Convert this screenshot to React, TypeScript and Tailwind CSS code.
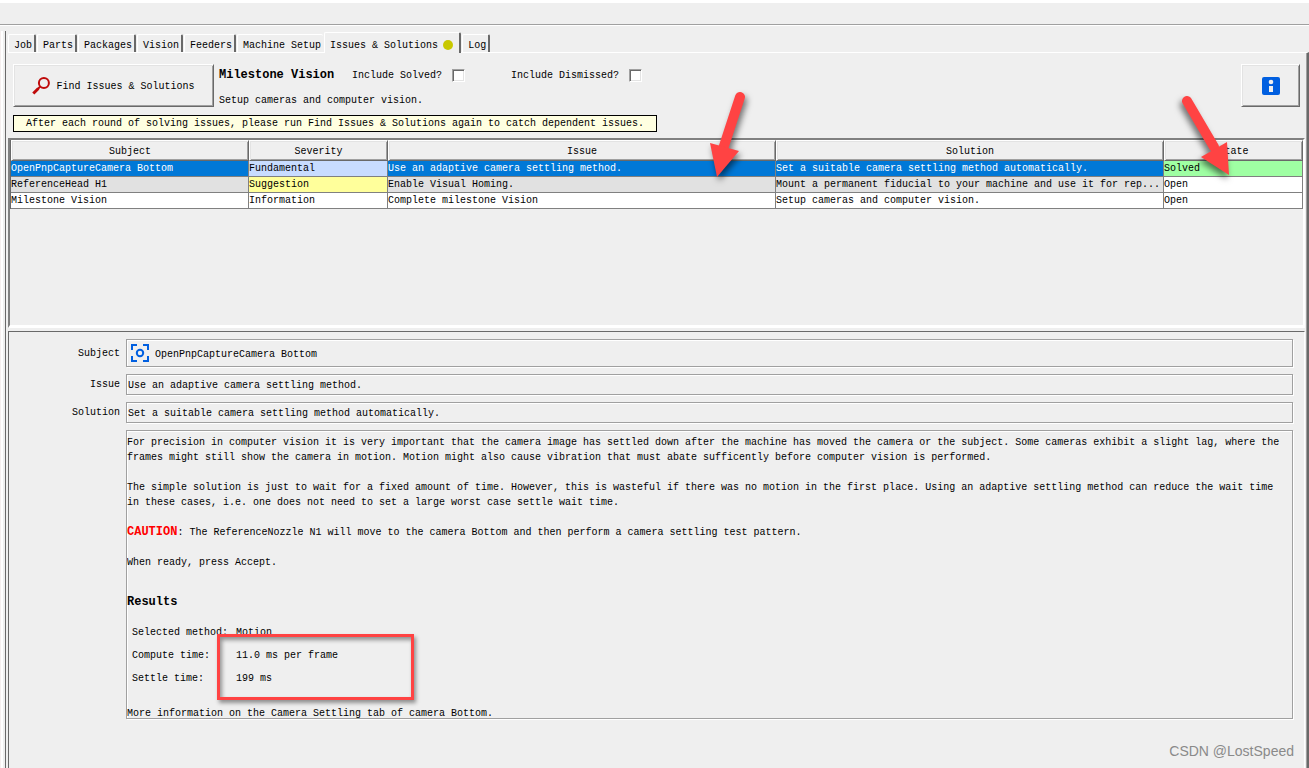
import { useState } from 'react';
import type { ReactNode } from 'react';

const tabs = ['Job', 'Parts', 'Packages', 'Vision', 'Feeders', 'Machine Setup', 'Issues & Solutions', 'Log'];

const issues = [
  {
    subject: 'OpenPnpCaptureCamera Bottom',
    severity: 'Fundamental',
    issue: 'Use an adaptive camera settling method.',
    solution: 'Set a suitable camera settling method automatically.',
    state: 'Solved',
    row: 'bg-[#0078d7] text-white',
    severityBg: 'bg-[#c8dcff] text-black',
    stateBg: 'bg-[#9fffa3] text-black',
  },
  {
    subject: 'ReferenceHead H1',
    severity: 'Suggestion',
    issue: 'Enable Visual Homing.',
    solution: 'Mount a permanent fiducial to your machine and use it for rep...',
    state: 'Open',
    row: 'bg-[#e1e1e1]',
    severityBg: 'bg-[#ffff9b]',
    stateBg: 'bg-white',
  },
  {
    subject: 'Milestone Vision',
    severity: 'Information',
    issue: 'Complete milestone Vision',
    solution: 'Setup cameras and computer vision.',
    state: 'Open',
    row: 'bg-white',
    severityBg: 'bg-white',
    stateBg: 'bg-white',
  },
];

const results = [
  ['Selected method:', 'Motion'],
  ['Compute time:', '11.0 ms per frame'],
  ['Settle time:', '199 ms'],
];

const raised =
  'border border-t-white border-l-white border-r-[#696969] border-b-[#696969] shadow-[inset_1px_1px_0_#e3e3e3,inset_-1px_-1px_0_#a0a0a0]';
const etched = 'border border-[#a0a0a0] shadow-[inset_1px_1px_0_#fff,1px_1px_0_#fff]';
const cell = 'h-4 overflow-hidden border-r border-b border-[#808080] p-0 leading-[15px] text-ellipsis whitespace-nowrap';

function Tab({ label, active, onClick }: { label: string; active: boolean; onClick: () => void }) {
  const beforeActive = label === 'Machine Setup';
  return (
    <button
      role="tab"
      aria-selected={active}
      onClick={onClick}
      className={`flex items-center gap-1 rounded-t-xs border-t border-l border-white pl-1.25 whitespace-nowrap ${
        active ? 'relative -mb-px h-5.25 bg-[#efefef] pt-1 pr-1.25' : 'h-4.5 pt-1 pr-0.5'
      } ${beforeActive ? '' : 'border-r-2 border-r-[#696969]'}`}
    >
      {label}
      {label === 'Issues & Solutions' && <span className="mx-px size-2.5 rounded-full bg-[#c8c800]" />}
    </button>
  );
}

function Check({ label }: { label: string }) {
  return (
    <label className="flex items-center gap-2.5">
      {label}
      <input
        type="checkbox"
        className="size-3.25 appearance-none border border-t-[#a0a0a0] border-r-white border-b-white border-l-[#a0a0a0] bg-white shadow-[inset_1px_1px_0_#696969,inset_-1px_-1px_0_#e3e3e3]"
      />
    </label>
  );
}

function Field({ id, label, value }: { id: string; label: string; value: string }) {
  return (
    <>
      <label htmlFor={id} className="self-center text-right">
        {label}
      </label>
      <input id={id} readOnly value={value} className={`h-5.25 px-px pt-0.5 outline-none ${etched}`} />
    </>
  );
}

function Para({ children }: { children: ReactNode }) {
  return <p className="mb-3.75">{children}</p>;
}

function CameraIcon() {
  return (
    <svg width="18" height="18" viewBox="0 0 18 18" fill="none" stroke="#005fe0" strokeWidth="2" aria-hidden="true">
      <path d="M6 1H1v5M12 1h5v5M6 17H1v-5M12 17h5v-5" />
      <circle cx="9" cy="9" r="3.2" strokeWidth="2" />
    </svg>
  );
}

export default function App() {
  const [tab, setTab] = useState('Issues & Solutions');

  return (
    <div className="relative flex h-screen min-h-[640px] flex-col overflow-hidden bg-[#efefef] font-['Liberation_Mono',monospace] text-[10px] leading-[15px] text-black">
      <header className="h-6.5 shrink-0 border-t-3 border-b border-t-white border-b-white shadow-[inset_0_-1px_0_#a0a0a0]" />

      <div className="mt-1.25 flex min-h-0 flex-1">
        <div className="w-1.25 shrink-0 border-r-2 border-l border-r-[#efefef] border-l-[#f5efef] bg-white" />
        <main className="flex min-w-0 flex-1 flex-col border-l border-[#696969] pl-0.5">
          <div role="tablist" className="flex h-5.25 shrink-0 items-end gap-px">
            {tabs.map(t => (
              <Tab key={t} label={t} active={t === tab} onClick={() => setTab(t)} />
            ))}
          </div>

          <section className="flex min-h-0 flex-1 flex-col border-t border-r-2 border-t-white border-r-[#696969] pr-px shadow-[inset_-1px_0_0_#a0a0a0]">
            <div className="flex shrink-0 items-start pt-2.75 pr-1.5 pl-1.25">
              <button className={`flex h-10.75 w-[201px] shrink-0 items-center justify-center gap-1.5 ${raised}`}>
                <svg width="18" height="18" viewBox="0 0 18 18" fill="none" stroke="#bf0a0a" strokeWidth="2" aria-hidden="true">
                  <circle cx="11.9" cy="6" r="5" />
                  <path d="M8 9.8L5.5 12.3" />
                  <path d="M6.3 11.5L1.3 16.5" strokeWidth="3" />
                </svg>
                <span className="pt-0.5">Find Issues &amp; Solutions</span>
              </button>
              <div className="pt-1 pl-1.25">
                <div className="flex items-center">
                  <strong className="w-[133px] text-xs leading-[15px] whitespace-nowrap">Milestone Vision</strong>
                  <Check label="Include Solved?" />
                  <span className="w-11.5" />
                  <Check label="Include Dismissed?" />
                </div>
                <p className="pt-2.5">Setup cameras and computer vision.</p>
              </div>
              <button aria-label="Information" className={`ml-auto flex h-10.75 w-14.75 shrink-0 items-center justify-center ${raised}`}>
                <svg width="18" height="18" viewBox="0 0 18 18" aria-hidden="true">
                  <rect width="18" height="18" rx="2" fill="#005fe0" />
                  <circle cx="9" cy="5" r="2.3" fill="#efefef" />
                  <path d="M7 9h4v6H7z" fill="#efefef" />
                </svg>
              </button>
            </div>

            <p className="mt-1.75 ml-1.25 h-4.25 w-[644px] shrink-0 border border-black bg-[#ffffe1] px-3 leading-[15px] whitespace-nowrap">
              After each round of solving issues, please run Find Issues &amp; Solutions again to catch dependent issues.
            </p>

            <div className="mt-1.5 mr-px h-[190px] shrink-0 border-t-2 border-r-2 border-b-3 border-l-2 border-t-[#808080] border-r-white border-b-white border-l-[#808080]">
              <table className="w-full table-fixed border-separate border-spacing-0 border-l border-[#696969]">
                <colgroup>
                  <col className="w-[238px]" />
                  <col className="w-[139px]" />
                  <col />
                  <col />
                  <col className="w-[139px]" />
                </colgroup>
                <thead>
                  <tr>
                    {['Subject', 'Severity', 'Issue', 'Solution', 'State'].map(h => (
                      <th key={h} className={`h-5.25 p-0 pt-0.5 text-center font-normal ${raised}`}>
                        {h}
                      </th>
                    ))}
                  </tr>
                </thead>
                <tbody>
                  {issues.map(i => (
                    <tr key={i.subject} className={i.row}>
                      <td className={cell}>{i.subject}</td>
                      <td className={`${cell} ${i.severityBg}`}>{i.severity}</td>
                      <td className={cell}>{i.issue}</td>
                      <td className={cell}>{i.solution}</td>
                      <td className={`${cell} ${i.stateBg}`}>{i.state}</td>
                    </tr>
                  ))}
                </tbody>
              </table>
            </div>

            <div className="mt-0.75 mr-px grid min-h-0 flex-1 grid-cols-[111px_1fr] grid-rows-[auto_auto_auto_minmax(0,1fr)] gap-x-1.5 gap-y-1.75 border-t border-r border-l border-t-[#696969] border-r-white border-l-[#696969] pt-1.75 pr-2.75 pb-12.25">
              <label htmlFor="subject" className="self-center text-right">
                Subject
              </label>
              <div className={`flex h-7 items-center gap-1.5 pl-1 ${etched}`}>
                <CameraIcon />
                <input id="subject" readOnly value="OpenPnpCaptureCamera Bottom" className="flex-1 pt-0.5 outline-none" />
              </div>
              <Field id="issue" label="Issue" value="Use an adaptive camera settling method." />
              <Field id="solution" label="Solution" value="Set a suitable camera settling method automatically." />

              <article className={`col-start-2 overflow-hidden pt-1 pr-2 ${etched}`}>
                <Para>
                  For precision in computer vision it is very important that the camera image has settled down after the machine
                  has moved the camera or the subject. Some cameras exhibit a slight lag, where the frames might still show the
                  camera in motion. Motion might also cause vibration that must abate sufficently before computer vision is
                  performed.
                </Para>
                <Para>
                  The simple solution is just to wait for a fixed amount of time. However, this is wasteful if there was no motion
                  in the first place. Using an adaptive settling method can reduce the wait time in these cases, i.e. one does not
                  need to set a large worst case settle wait time.
                </Para>
                <Para>
                  <strong className="text-xs leading-[15px] text-[#f00]">CAUTION</strong>: The ReferenceNozzle N1 will move to the
                  camera Bottom and then perform a camera settling test pattern.
                </Para>
                <Para>When ready, press Accept.</Para>
                <h2 className="mt-6.25 mb-2.75 text-xs leading-[15px] font-bold">Results</h2>
                <div className="relative mb-4">
                  <table className="ml-1.25">
                    <tbody>
                      {results.map(([name, value]) => (
                        <tr key={name} className="h-5.75">
                          <th scope="row" className="w-[104px] p-0 text-left font-normal whitespace-nowrap">
                            {name}
                          </th>
                          <td className="p-0">{value}</td>
                        </tr>
                      ))}
                    </tbody>
                  </table>
                  {/* highlight over the measured times */}
                  <div className="absolute top-3.25 left-[90px] h-[66px] w-[197px] border-3 border-[#ff4343] shadow-[2px_3px_4px_#0006,inset_2px_3px_4px_#0006]" />
                </div>
                <p>More information on the Camera Settling tab of camera Bottom.</p>
              </article>
            </div>
          </section>
        </main>
      </div>

      <svg className="pointer-events-none absolute top-[88px] left-[700px] drop-shadow-[2px_4px_3px_#0008]" width="56" height="96" fill="#ff4343" aria-hidden="true">
        <path d="M40 9L23 61" stroke="#ff4343" strokeWidth="10" strokeLinecap="round" />
        <path d="M10 55L39 63L17 89Z" />
      </svg>
      <svg className="pointer-events-none absolute top-[88px] right-[69px] drop-shadow-[-2px_4px_3px_#0008]" width="64" height="96" fill="#ff4343" aria-hidden="true">
        <path d="M11 13L38 59" stroke="#ff4343" strokeWidth="10" strokeLinecap="round" />
        <path d="M25 69L51 54L53 87Z" />
      </svg>
      <span className="absolute right-[15px] bottom-1.75 font-['Liberation_Sans',sans-serif] text-sm leading-5 text-[#8a8a8a]">
        CSDN @LostSpeed
      </span>
    </div>
  );
}
